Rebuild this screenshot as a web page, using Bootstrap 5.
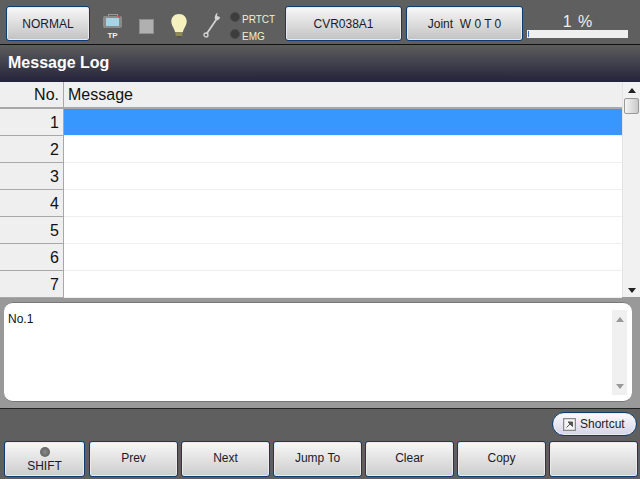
<!DOCTYPE html>
<html lang="en"><head><meta charset="utf-8"><title>Message Log</title>
<link rel="stylesheet" href="https://cdn.jsdelivr.net/npm/bootstrap@5.3.0/dist/css/bootstrap.min.css">
<style>
html,body{margin:0;height:479px;overflow:hidden}
body{width:640px;background:#5f5f5f;font-family:"Liberation Sans",Arial,sans-serif;color:#111}
.topbar{height:45px;background:#5f5f5f;border-bottom:1px solid #111;padding:6px 0 0 6px;align-items:flex-start}
.pbtn{box-sizing:border-box;height:35px;border:1px solid #0c3c72;border-radius:3px;background:linear-gradient(#f8f8f8,#c2c2c2);box-shadow:inset 0 0 0 1px #eaeaea;font-size:12px;color:#1a1a2a;display:flex;align-items:center;justify-content:center;padding:0;line-height:1;flex:none}
.b-normal{width:84px}.b-mid{width:117px}
.ico{flex:none;display:block}
.ico-tp{margin:7px 0 0 12px}
.ico-stop{margin:13px 0 0 15px}
.ico-bulb{margin:7px 0 0 16px}
.ico-wrench{margin:6px 0 0 15px}
.lamps{width:51px;height:34px;font-size:10px;color:#f1f1cc;line-height:12px;margin:3px 0 0 9px}
.lamp-row{display:flex;align-items:flex-start;gap:2px;height:17px;padding-top:3px}
.lamp-row span:last-child{margin-top:2px}
.dot{width:10px;height:10px;border-radius:50%;background:#3d3d3d;border:1px solid #4a4a4a;flex:none}
.load{width:101px;margin-left:4px;text-align:center;color:#eee;font-size:16px;line-height:16px;padding-top:8px;word-spacing:2px}
.loadtrack{height:8px;background:#efefef;margin-top:0;padding:1px}
.loadfill{width:1px;height:6px;background:#3a6fc0}
.titlebar{height:37px;background:linear-gradient(#5d5d5d,#23233b);color:#fff;font-weight:700;font-size:16px;line-height:35px;padding-left:8px}
.tablewrap{height:215px;background:#fff}
.grid{width:622px;flex:none}
.hrow{height:27px;display:flex;background:#efefef;border-bottom:2px solid #a8a8a8;font-size:16px;color:#111;line-height:26px}
.drow{height:27px;display:flex;font-size:16px;line-height:27px;border-bottom:1px solid #efefef}
.cno{width:64px;flex:none;background:#efefef;border-right:1px solid #a8a8a8;text-align:right;padding-right:4px;box-sizing:border-box}
.drow .cno{border-bottom:1px solid #a8a8a8;margin-bottom:-1px}
.cmsg{flex:1;padding-left:5px}
.hrow .cmsg{padding-left:4px}
.sel .cmsg{background:#3797ff}
.vscroll{width:18px;background:#f1f1f1;border-left:1px solid #e3e3e3;flex:none;padding:6px 0 4px}
.arrow-up{width:0;height:0;border:4px solid transparent;border-top:0;border-bottom:5px solid #222;margin:0 auto}
.arrow-dn{width:0;height:0;border:4px solid transparent;border-bottom:0;border-top:5px solid #222;margin:0 auto}
.thumb{width:15px;height:16px;background:linear-gradient(90deg,#f4f4f4,#c9c9c9);border:1px solid #999;border-radius:2px;margin:5px auto 0}
.detail{height:112px;background:#999;border-bottom:1px solid #222;padding:5px 8px 0 4px}
.dbox{height:100px;background:#fff;border-radius:9px;padding:9px 5px 0 4px;font-size:12px;line-height:14px;color:#111;border-top:1px solid #777;border-bottom:1px solid #777}
.dscroll{width:15px;height:85px;margin-top:-2px;background:#f0f0f0;padding:7px 0 6px}
.dscroll .arrow-up{border-bottom-color:#999}.dscroll .arrow-dn{border-top-color:#999}
.bottom{height:70px;padding:3px 3px 0 3px}
.shortcut{height:24px;width:85px;align-self:flex-end;border:1px solid #0c3c72;border-radius:12px;background:linear-gradient(#fbfbff,#d6d4e6);font-size:12px;padding:0 0 0 10px;gap:4px;color:#222;justify-content:flex-start}
.fbtns{margin-top:5px;gap:3px}
.fbtn{width:89px;height:36px;font-size:12px;padding-bottom:2px;background:linear-gradient(#f8f8f8,#cccccc)}
.fshift{width:81px;margin:0 1px;flex-direction:column;padding:1px 0 0}
.led{width:10px;height:10px;border-radius:50%;background:radial-gradient(#8a8a8a,#555);margin-bottom:3px}
</style></head>
<body>
<div class="topbar d-flex">
  <button class="pbtn b-normal" type="button">NORMAL</button>
  <svg class="ico ico-tp" width="22" height="26" viewBox="0 0 22 26"><rect x="6.500" y="1.500" width="9" height="3" fill="none" stroke="#999"/><rect x="1" y="3" width="19" height="12" rx="2" fill="#8b8b8b"/><rect x="4" y="5" width="13" height="8" fill="#a5d4e6"/><circle cx="17" cy="3.500" r="1" fill="#e33"/><text x="10.500" y="25" text-anchor="middle" font-size="8" font-weight="700" fill="#eee" font-family="Liberation Sans">TP</text></svg>
  <svg class="ico ico-stop" width="15" height="15"><rect x="0.500" y="0.500" width="14" height="14" fill="#b0b0b0" stroke="#8f8f8f"/></svg>
  <svg class="ico ico-bulb" width="18" height="25" viewBox="0 0 18 26"><path d="M9 1C4 1 1 4.500 1 9c0 4 3 6 4 11h8c1-5 4-7 4-11 0-4.500-3-8-8-8z" fill="#f5f0bd"/><rect x="5.500" y="20" width="7" height="4" fill="#8e8a55"/><rect x="7" y="24" width="4" height="2" fill="#555"/></svg>
  <svg class="ico ico-wrench" width="18" height="26" viewBox="0 0 18 26"><path d="M13 8 3.500 22" stroke="#d4d4d4" stroke-width="1.700"/><path d="M11.800 7c-.4-3 .8-5 2.700-6.500l-.5 3.500 3 1c0 2-2 3.500-4 3.500z" fill="#d4d4d4"/><circle cx="3" cy="23" r="2" fill="none" stroke="#d4d4d4" stroke-width="1.300"/></svg>
  <div class="lamps">
    <div class="lamp-row"><span class="dot"></span><span>PRTCT</span></div>
    <div class="lamp-row"><span class="dot"></span><span>EMG</span></div>
  </div>
  <button class="pbtn b-mid ms-1" type="button">CVR038A1</button>
  <button class="pbtn b-mid ms-1" type="button">Joint&nbsp; W 0 T 0</button>
  <div class="load">1 %<div class="loadtrack"><div class="loadfill"></div></div></div>
</div>
<div class="titlebar">Message Log</div>
<div class="tablewrap d-flex">
  <div class="grid">
    <div class="hrow"><div class="cno">No.</div><div class="cmsg">Message</div></div>
    <div class="drow sel"><div class="cno">1</div><div class="cmsg"></div></div>
    <div class="drow"><div class="cno">2</div><div class="cmsg"></div></div>
    <div class="drow"><div class="cno">3</div><div class="cmsg"></div></div>
    <div class="drow"><div class="cno">4</div><div class="cmsg"></div></div>
    <div class="drow"><div class="cno">5</div><div class="cmsg"></div></div>
    <div class="drow"><div class="cno">6</div><div class="cmsg"></div></div>
    <div class="drow"><div class="cno">7</div><div class="cmsg"></div></div>
  </div>
  <div class="vscroll d-flex flex-column">
    <div class="arrow-up"></div><div class="thumb"></div><div class="flex-grow-1"></div><div class="arrow-dn"></div>
  </div>
</div>
<div class="detail">
  <div class="dbox d-flex justify-content-between">
    <div>No.1</div>
    <div class="dscroll d-flex flex-column justify-content-between"><div class="arrow-up"></div><div class="arrow-dn"></div></div>
  </div>
</div>
<div class="bottom d-flex flex-column">
  <button class="pbtn shortcut" type="button"><svg width="13" height="13"><rect x="0.500" y="0.500" width="12" height="12" fill="#f4f4f4" stroke="#8a8a8a" stroke-width="1.500"/><path d="M3.500 9.500 8 5M5 4h4.500v4.500z" stroke="#555" fill="#555"/></svg>Shortcut</button>
  <div class="d-flex fbtns">
    <button class="pbtn fbtn fshift" type="button"><span class="led"></span>SHIFT</button>
    <button class="pbtn fbtn" type="button">Prev</button>
    <button class="pbtn fbtn" type="button">Next</button>
    <button class="pbtn fbtn" type="button">Jump To</button>
    <button class="pbtn fbtn" type="button">Clear</button>
    <button class="pbtn fbtn" type="button">Copy</button>
    <button class="pbtn fbtn" type="button"></button>
  </div>
</div>
</body></html>
